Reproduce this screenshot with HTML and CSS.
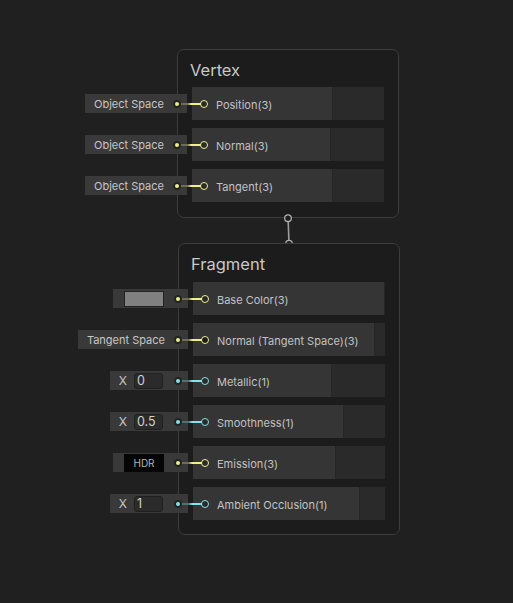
FILE: index.html
```html
<!DOCTYPE html>
<html>
<head>
<meta charset="utf-8">
<link rel="stylesheet" href="styles.css">
</head>
<body>
<div class="canvas">
  <section class="stack vertex">
    <h2 class="stack-title">Vertex</h2>
    <div class="blocks">
      <div class="block">
        <div class="field"><span class="field-text">Object Space</span></div>
        <span class="wire vec"></span><span class="dot vec"></span>
        <div class="block-main" style="width:141px"><span class="port vec"></span><span class="label">Position(3)</span></div>
      </div>
      <div class="block">
        <div class="field"><span class="field-text">Object Space</span></div>
        <span class="wire vec"></span><span class="dot vec"></span>
        <div class="block-main" style="width:139px"><span class="port vec"></span><span class="label">Normal(3)</span></div>
      </div>
      <div class="block">
        <div class="field"><span class="field-text">Object Space</span></div>
        <span class="wire vec"></span><span class="dot vec"></span>
        <div class="block-main" style="width:141px"><span class="port vec"></span><span class="label">Tangent(3)</span></div>
      </div>
    </div>
  </section>

  <svg class="link" width="20" height="42" viewBox="280 210 20 42">
    <line x1="288.2" y1="221.5" x2="288.9" y2="240.2" stroke="#9c9c9c" stroke-width="1.6"/>
    <circle cx="288" cy="218.2" r="3.3" fill="#1d1d1d" stroke="#b0b0b0" stroke-width="1.3"/>
    <circle cx="289" cy="243.6" r="3.3" fill="#1d1d1d" stroke="#b0b0b0" stroke-width="1.3"/>
  </svg>

  <section class="stack fragment">
    <h2 class="stack-title">Fragment</h2>
    <div class="blocks">
      <div class="block">
        <div class="field field-wide"><span class="swatch"></span></div>
        <span class="wire vec"></span><span class="dot vec"></span>
        <div class="block-main" style="width:192px"><span class="port vec"></span><span class="label">Base Color(3)</span></div>
      </div>
      <div class="block">
        <div class="field"><span class="field-text">Tangent Space</span></div>
        <span class="wire vec"></span><span class="dot vec"></span>
        <div class="block-main" style="width:182px"><span class="port vec filled"></span><span class="label">Normal (Tangent Space)(3)</span></div>
      </div>
      <div class="block">
        <div class="field field-num"><span class="axis">X</span><span class="num">0</span></div>
        <span class="wire flt"></span><span class="dot flt"></span>
        <div class="block-main" style="width:139px"><span class="port flt"></span><span class="label">Metallic(1)</span></div>
      </div>
      <div class="block">
        <div class="field field-num"><span class="axis">X</span><span class="num">0.5</span></div>
        <span class="wire flt"></span><span class="dot flt"></span>
        <div class="block-main" style="width:151px"><span class="port flt"></span><span class="label">Smoothness(1)</span></div>
      </div>
      <div class="block">
        <div class="field field-wide"><span class="hdr">HDR</span></div>
        <span class="wire vec"></span><span class="dot vec"></span>
        <div class="block-main" style="width:143px"><span class="port vec"></span><span class="label">Emission(3)</span></div>
      </div>
      <div class="block">
        <div class="field field-num"><span class="axis">X</span><span class="num">1</span></div>
        <span class="wire flt"></span><span class="dot flt"></span>
        <div class="block-main" style="width:167px"><span class="port flt"></span><span class="label">Ambient Occlusion(1)</span></div>
      </div>
    </div>
  </section>
</div>
</body>
</html>
```

FILE: styles.css
```css
html, body {
  margin: 0;
  padding: 0;
  background: #202020;
}

body {
  width: 513px;
  height: 603px;
  overflow: hidden;
  font-family: Inter, "Noto Sans", sans-serif;
  color: #c4c4c4;
}

.canvas {
  position: relative;
  width: 513px;
  height: 603px;
}

.stack {
  position: absolute;
  width: 220px;
  border: 1px solid #3c3c3c;
  border-radius: 7px;
  background: #1c1c1c;
  padding-bottom: 15px;
}

.vertex {
  left: 177px;
  top: 49px;
}

.fragment {
  left: 178px;
  top: 243px;
  padding-bottom: 14px;
}

.stack-title {
  margin: 0;
  padding: 10px 12px 7px;
  height: 20px;
  font-size: 16.5px;
  line-height: 20px;
  font-weight: 400;
  color: #c8c8c8;
}

.fragment .stack-title {
  height: 21px;
}

.blocks {
  display: flex;
  flex-direction: column;
  gap: 8px;
  padding: 0 14px;
}

.block {
  position: relative;
  display: flex;
  height: 33px;
  background: #2a2a2a;
}

.block-main {
  display: flex;
  align-items: center;
  gap: 8px;
  padding-left: 8px;
  box-sizing: border-box;
  height: 33px;
  background: #353535;
  border-right: 1px solid #262626;
}

.label {
  font-size: 11px;
  color: #c2c2c2;
  white-space: nowrap;
  margin-top: 2px;
}

.port {
  width: 6px;
  height: 6px;
  border-radius: 50%;
  border: 1.5px solid #eef08c;
  background: #2a2a2a;
  flex: none;
}

.port.flt {
  border-color: #84e4e7;
}

.port.filled {
  background: #1a1a1a;
}

/* input field overlay outside the node */
.field {
  position: absolute;
  right: calc(100% + 5px);
  top: 7px;
  height: 19px;
  display: flex;
  align-items: center;
  padding: 0 23px 0 9px;
  background: #393939;
  white-space: nowrap;
}

.field-text {
  font-size: 11px;
  color: #c6c6c6;
}

.field-wide {
  padding: 0 24px 0 11px;
}

.swatch {
  width: 38px;
  height: 14px;
  background: #808080;
  border: 1px solid #222222;
}

.hdr {
  width: 40px;
  height: 18px;
  background: #050505;
  color: #b4b4b4;
  font-size: 10px;
  display: flex;
  align-items: center;
  justify-content: center;
}

.field-num {
  padding: 0 25px 0 9px;
  gap: 7px;
}

.axis {
  font-size: 12px;
  color: #c6c6c6;
}

.num {
  width: 25px;
  height: 14px;
  padding-left: 2px;
  border: 1px solid #202020;
  border-radius: 3px;
  background: #2b2b2b;
  font-size: 12.5px;
  line-height: 14px;
  color: #d0d0d0;
}

.wire {
  position: absolute;
  left: -13px;
  top: 15.5px;
  width: 22px;
  height: 2px;
  background: linear-gradient(90deg, #6e6f52 0, #6e6f52 40%, #eef08c 55%, #eef08c 100%);
}

.wire.flt {
  background: linear-gradient(90deg, #4f7273 0, #4f7273 40%, #84e4e7 55%, #84e4e7 100%);
}

.dot {
  position: absolute;
  left: -19px;
  top: 12.5px;
  width: 4px;
  height: 4px;
  border-radius: 50%;
  border: 2px solid #232323;
  background: #eef08c;
}

.dot.flt {
  background: #84e4e7;
}

.link {
  position: absolute;
  left: 280px;
  top: 210px;
}
```
